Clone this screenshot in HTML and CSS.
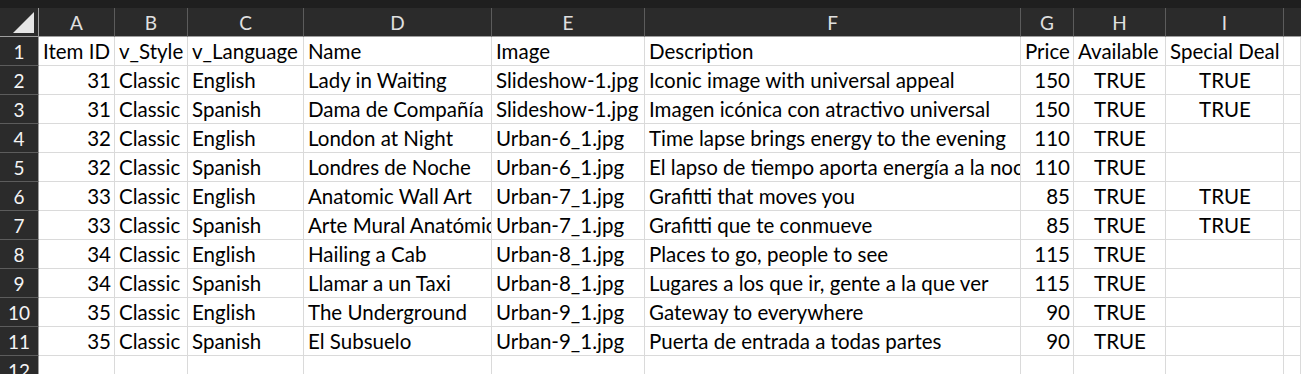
FILE: index.html
```html
<!DOCTYPE html>
<html lang="en">
<head>
  <meta charset="UTF-8">
  <title>Products sheet</title>
  <link rel="stylesheet" href="styles.css">
</head>
<body>

  <div class="topbar"></div>

  <!-- Sheet grid -->
  <div class="sheet">
    <!-- column headers -->
    <div class="corner"><svg width="21" height="21" viewBox="0 0 21 21"><polygon points="21,0 21,21 0,21" fill="#e6e6e6"/></svg></div>
    <div class="colhead">A</div>
    <div class="colhead">B</div>
    <div class="colhead">C</div>
    <div class="colhead">D</div>
    <div class="colhead">E</div>
    <div class="colhead">F</div>
    <div class="colhead">G</div>
    <div class="colhead">H</div>
    <div class="colhead">I</div>
    <div class="colhead last"></div>

    <div class="rowhead">1</div>
    <div class="cell">Item ID</div>
    <div class="cell">v_Style</div>
    <div class="cell">v_Language</div>
    <div class="cell">Name</div>
    <div class="cell">Image</div>
    <div class="cell">Description</div>
    <div class="cell">Price</div>
    <div class="cell">Available</div>
    <div class="cell">Special Deal</div>
    <div class="cell"></div>

    <div class="rowhead">2</div>
    <div class="cell num">31</div>
    <div class="cell">Classic</div>
    <div class="cell">English</div>
    <div class="cell">Lady in Waiting</div>
    <div class="cell">Slideshow-1.jpg</div>
    <div class="cell">Iconic image with universal appeal</div>
    <div class="cell num">150</div>
    <div class="cell bool">TRUE</div>
    <div class="cell bool">TRUE</div>
    <div class="cell"></div>

    <div class="rowhead">3</div>
    <div class="cell num">31</div>
    <div class="cell">Classic</div>
    <div class="cell">Spanish</div>
    <div class="cell">Dama de Compañía</div>
    <div class="cell">Slideshow-1.jpg</div>
    <div class="cell">Imagen icónica con atractivo universal</div>
    <div class="cell num">150</div>
    <div class="cell bool">TRUE</div>
    <div class="cell bool">TRUE</div>
    <div class="cell"></div>

    <div class="rowhead">4</div>
    <div class="cell num">32</div>
    <div class="cell">Classic</div>
    <div class="cell">English</div>
    <div class="cell">London at Night</div>
    <div class="cell">Urban-6_1.jpg</div>
    <div class="cell">Time lapse brings energy to the evening</div>
    <div class="cell num">110</div>
    <div class="cell bool">TRUE</div>
    <div class="cell"></div>
    <div class="cell"></div>

    <div class="rowhead">5</div>
    <div class="cell num">32</div>
    <div class="cell">Classic</div>
    <div class="cell">Spanish</div>
    <div class="cell">Londres de Noche</div>
    <div class="cell">Urban-6_1.jpg</div>
    <div class="cell">El lapso de tiempo aporta energía a la noche</div>
    <div class="cell num">110</div>
    <div class="cell bool">TRUE</div>
    <div class="cell"></div>
    <div class="cell"></div>

    <div class="rowhead">6</div>
    <div class="cell num">33</div>
    <div class="cell">Classic</div>
    <div class="cell">English</div>
    <div class="cell">Anatomic Wall Art</div>
    <div class="cell">Urban-7_1.jpg</div>
    <div class="cell">Grafitti that moves you</div>
    <div class="cell num">85</div>
    <div class="cell bool">TRUE</div>
    <div class="cell bool">TRUE</div>
    <div class="cell"></div>

    <div class="rowhead">7</div>
    <div class="cell num">33</div>
    <div class="cell">Classic</div>
    <div class="cell">Spanish</div>
    <div class="cell">Arte Mural Anatómico</div>
    <div class="cell">Urban-7_1.jpg</div>
    <div class="cell">Grafitti que te conmueve</div>
    <div class="cell num">85</div>
    <div class="cell bool">TRUE</div>
    <div class="cell bool">TRUE</div>
    <div class="cell"></div>

    <div class="rowhead">8</div>
    <div class="cell num">34</div>
    <div class="cell">Classic</div>
    <div class="cell">English</div>
    <div class="cell">Hailing a Cab</div>
    <div class="cell">Urban-8_1.jpg</div>
    <div class="cell">Places to go, people to see</div>
    <div class="cell num">115</div>
    <div class="cell bool">TRUE</div>
    <div class="cell"></div>
    <div class="cell"></div>

    <div class="rowhead">9</div>
    <div class="cell num">34</div>
    <div class="cell">Classic</div>
    <div class="cell">Spanish</div>
    <div class="cell">Llamar a un Taxi</div>
    <div class="cell">Urban-8_1.jpg</div>
    <div class="cell">Lugares a los que ir, gente a la que ver</div>
    <div class="cell num">115</div>
    <div class="cell bool">TRUE</div>
    <div class="cell"></div>
    <div class="cell"></div>

    <div class="rowhead">10</div>
    <div class="cell num">35</div>
    <div class="cell">Classic</div>
    <div class="cell">English</div>
    <div class="cell">The Underground</div>
    <div class="cell">Urban-9_1.jpg</div>
    <div class="cell">Gateway to everywhere</div>
    <div class="cell num">90</div>
    <div class="cell bool">TRUE</div>
    <div class="cell"></div>
    <div class="cell"></div>

    <div class="rowhead">11</div>
    <div class="cell num">35</div>
    <div class="cell">Classic</div>
    <div class="cell">Spanish</div>
    <div class="cell">El Subsuelo</div>
    <div class="cell">Urban-9_1.jpg</div>
    <div class="cell">Puerta de entrada a todas partes</div>
    <div class="cell num">90</div>
    <div class="cell bool">TRUE</div>
    <div class="cell"></div>
    <div class="cell"></div>

    <div class="rowhead">12</div>
    <div class="cell"></div>
    <div class="cell"></div>
    <div class="cell"></div>
    <div class="cell"></div>
    <div class="cell"></div>
    <div class="cell"></div>
    <div class="cell"></div>
    <div class="cell"></div>
    <div class="cell"></div>
    <div class="cell"></div>
  </div>

</body>
</html>
```

FILE: styles.css
```css
body {
  margin: 0;
  background: #fff;
  font-family: Lato, "Liberation Sans", sans-serif;
  font-size: 20.5px;
  overflow: hidden;
}
.topbar {
  height: 8px;
  background: #1f1f1f;
}
.sheet {
  display: grid;
  grid-template-columns: 39px 76px 73px 116px 188px 153px 376px 53px 92px 118px 1fr;
  grid-auto-rows: 29px;
}
.sheet > div {
  box-sizing: border-box;
  overflow: hidden;
  white-space: nowrap;
}
.corner {
  background: #2b2b2b;
  border-right: 1px solid #9e9e9e;
  border-bottom: 1px solid #9e9e9e;
  display: flex;
  align-items: flex-end;
  justify-content: flex-end;
  padding: 0 4px 3px 0;
}
.corner svg {
  display: block;
}
.colhead {
  background: #2b2b2b;
  color: #e0e0e0;
  font-size: 19px;
  text-align: center;
  line-height: 29px;
  border-right: 1px solid #5c5c5c;
  border-bottom: 1px solid #9e9e9e;
}
.colhead.last {
  border-right: none;
}
.rowhead {
  background: #2b2b2b;
  color: #f4f4f4;
  font-size: 19px;
  text-align: center;
  line-height: 29px;
  border-right: 1px solid #9e9e9e;
  border-bottom: 1px solid #5c5c5c;
}
.cell {
  color: #000;
  padding: 0 3px 0 4px;
  line-height: 29px;
  border-right: 1px solid #dadada;
  border-bottom: 1px solid #dadada;
}
.num {
  text-align: right;
}
.bool {
  text-align: center;
}
```
